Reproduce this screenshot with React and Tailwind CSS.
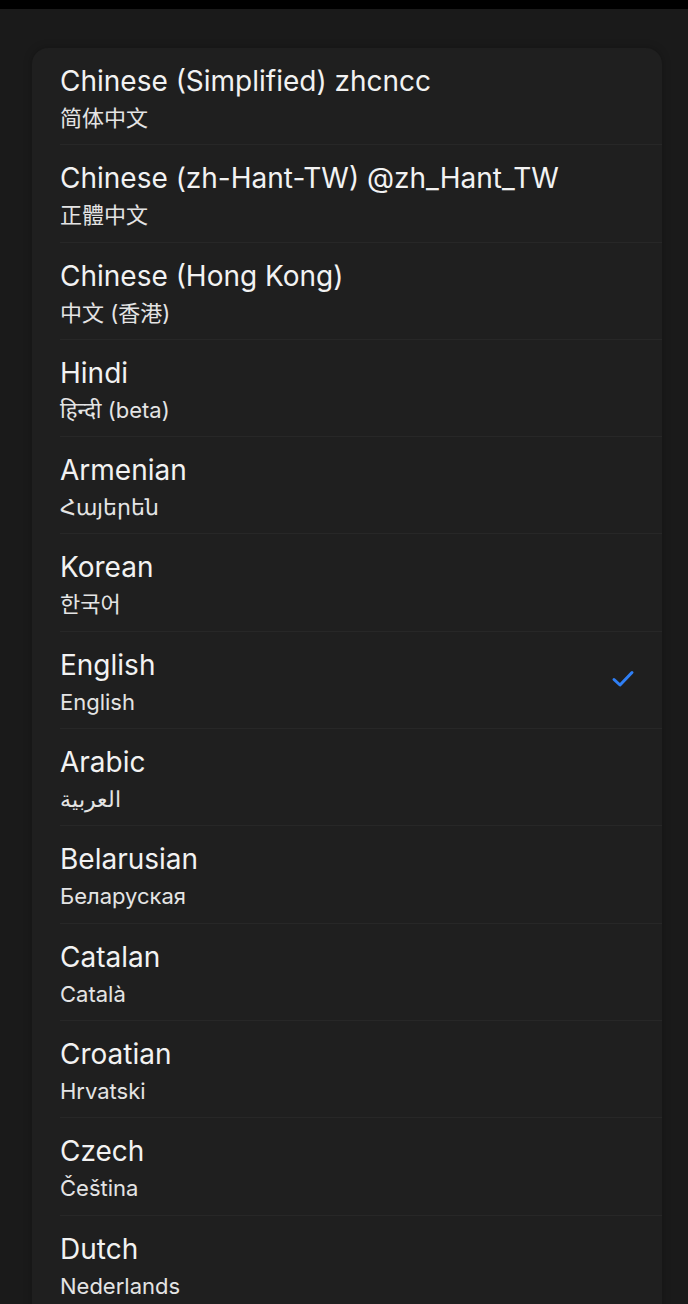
import React from 'react';

const languages = [
  { name: 'Chinese (Simplified) zhcncc', native: '简体中文' },
  { name: 'Chinese (zh-Hant-TW) @zh_Hant_TW', native: '正體中文' },
  { name: 'Chinese (Hong Kong)', native: '中文 (香港)' },
  { name: 'Hindi', native: 'हिन्दी (beta)' },
  { name: 'Armenian', native: 'Հայերեն' },
  { name: 'Korean', native: '한국어' },
  { name: 'English', native: 'English', selected: true },
  { name: 'Arabic', native: 'العربية' },
  { name: 'Belarusian', native: 'Беларуская' },
  { name: 'Catalan', native: 'Català' },
  { name: 'Croatian', native: 'Hrvatski' },
  { name: 'Czech', native: 'Čeština' },
  { name: 'Dutch', native: 'Nederlands' },
];

const font = {
  fontFamily: 'Inter, "Noto Sans", "Noto Sans CJK SC", sans-serif',
};

const LanguageRow = ({ lang, last }) => (
  <div className="relative flex h-[97.3px] shrink-0 items-start pl-[28px] pr-[26px]">
    <div className="flex-1 pt-[16px]">
      <div className="text-[28px] leading-[34px] text-[#f2f2f2]">{lang.name}</div>
      <div className="mt-[7px] text-[22px] leading-[26px] text-[#e4e4e4]">{lang.native}</div>
    </div>
    {lang.selected && (
      <svg className="mt-[35px] mr-[1px]" width="24" height="24" viewBox="0 0 24 24" fill="none">
        <path d="M3 12.5l6 5.5L21 5.5" stroke="#2f7ff5" strokeWidth="3" strokeLinecap="round" strokeLinejoin="round" />
      </svg>
    )}
    {!last && <div className="absolute bottom-0 left-[28px] right-0 h-px bg-[#272727]" />}
  </div>
);

export default function App() {
  return (
    <div className="flex h-[1304px] w-[688px] flex-col overflow-hidden bg-[#1a1a1a]" style={font}>
      <div className="h-[9px] shrink-0 bg-black" />
      <div className="flex-1 pl-[32px] pr-[26px] pt-[39px]">
        <div className="flex flex-col overflow-hidden rounded-t-[16px] bg-[#1f1f1f] shadow-[0_0_8px_rgba(0,0,0,0.25)]">
          {languages.map((lang, i) => (
            <LanguageRow key={lang.name} lang={lang} last={i === languages.length - 1} />
          ))}
        </div>
      </div>
    </div>
  );
}
